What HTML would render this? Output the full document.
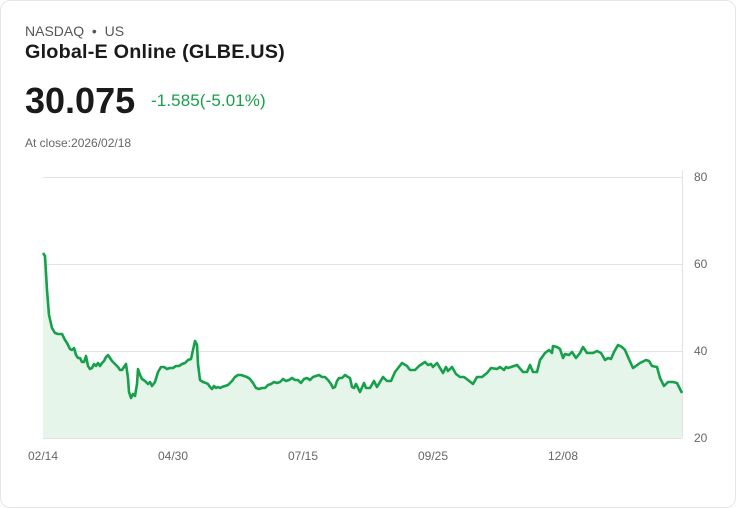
<!DOCTYPE html><html><head><style>
body{margin:0;background:#fff;font-family:"Liberation Sans",sans-serif;}
.card{position:absolute;left:0;top:0;width:734px;height:506px;border:1px solid #e3e6ec;border-radius:10px;}
.t{position:absolute;white-space:nowrap;}
</style></head><body><div class="card"></div>
<div class="t" style="left:25px;top:23px;font-size:14px;color:#555;">NASDAQ &nbsp;•&nbsp; US</div>
<div class="t" style="left:25px;top:41px;font-size:19.8px;font-weight:bold;color:#1a1a1a;letter-spacing:0.2px;">Global-E Online (GLBE.US)</div>
<div class="t" style="left:25px;top:80px;font-size:36px;font-weight:bold;color:#1a1a1a;">30.075</div>
<div class="t" style="left:151px;top:91px;font-size:17px;color:#18a04a;letter-spacing:0.1px;">-1.585(-5.01%)</div>
<div class="t" style="left:25px;top:136px;font-size:12px;color:#666;">At close:2026/02/18</div>
<svg width="736" height="508" style="position:absolute;left:0;top:0" font-family="Liberation Sans" font-size="12" fill="#666">
<g stroke="#e2e2e2" stroke-width="1"><line x1="43" y1="177.5" x2="682" y2="177.5"/><line x1="43" y1="264.5" x2="682" y2="264.5"/><line x1="43" y1="351.5" x2="682" y2="351.5"/><line x1="43" y1="438.5" x2="682" y2="438.5"/><line x1="682.5" y1="170" x2="682.5" y2="438"/></g>
<text x="694" y="181">80</text><text x="694" y="268">60</text><text x="694" y="355">40</text><text x="694" y="442">20</text>
<text x="28" y="460">02/14</text><text x="158" y="460">04/30</text><text x="288" y="460">07/15</text><text x="418" y="460">09/25</text><text x="548" y="460">12/08</text>
<polygon fill="#e6f5ea" points="43,438 43,253 45,256 47,290 49,315 52,328 55,333 58,334 62,334 65,340 67,343 70,349 72,350 74,348 76,355 78,358 80,358 82,362 84,362 86,356 88,366 90,369 92,368 94,364 96,366 98,363 100,366 102,363 104,361 106,357 108,355 110,358 112,361 115,364 118,367 120,370 122,370 124,367 126,364 128,378 129,392 131,398 133,394 135,396 137,384 138,369 140,375 142,379 145,381 148,384 150,382 152,386 155,382 158,372 161,367 164,367 167,369 170,368 173,368 176,366 179,366 182,364 185,363 188,360 191,359 193,350 195,341 197,345 198,364 200,380 203,382 206,383 208,384 210,387 212,389 214,386 216,388 218,387 220,388 222,387 225,386 228,385 232,381 235,377 238,375 241,375 244,376 247,377 250,379 253,383 256,388 259,389 262,388 265,388 268,385 271,384 274,382 277,383 280,382 283,379 286,381 289,380 292,378 295,380 298,380 301,383 304,379 307,378 310,380 313,377 316,376 319,375 322,377 325,377 328,380 331,384 333,388 335,387 337,381 339,378 342,378 345,375 348,377 350,378 352,387 354,388 356,384 360,392 364,383 366,388 370,388 374,381 377,387 383,377 387,381 391,381 395,372 402,363 407,366 410,370 415,370 419,366 425,362 428,365 431,364 433,367 437,363 443,373 446,367 448,371 452,367 456,374 460,377 464,377 468,380 473,384 477,377 482,377 487,373 491,368 497,369 500,367 504,370 506,367 508,368 517,365 523,372 527,372 530,365 533,372 537,372 540,360 545,353 549,350 552,353 553,346 557,347 560,349 563,358 565,354 569,355 572,352 576,358 580,353 583,347 587,353 590,353 593,353 597,351 601,353 605,360 608,358 611,359 614,352 618,345 622,347 625,350 628,357 633,368 640,363 646,360 649,361 652,366 657,367 660,378 664,386 668,382 673,382 677,383 682,393 682,438"/>
<polyline fill="none" stroke="#16a04a" stroke-width="2.6" stroke-linejoin="round" points="43,253 45,256 47,290 49,315 52,328 55,333 58,334 62,334 65,340 67,343 70,349 72,350 74,348 76,355 78,358 80,358 82,362 84,362 86,356 88,366 90,369 92,368 94,364 96,366 98,363 100,366 102,363 104,361 106,357 108,355 110,358 112,361 115,364 118,367 120,370 122,370 124,367 126,364 128,378 129,392 131,398 133,394 135,396 137,384 138,369 140,375 142,379 145,381 148,384 150,382 152,386 155,382 158,372 161,367 164,367 167,369 170,368 173,368 176,366 179,366 182,364 185,363 188,360 191,359 193,350 195,341 197,345 198,364 200,380 203,382 206,383 208,384 210,387 212,389 214,386 216,388 218,387 220,388 222,387 225,386 228,385 232,381 235,377 238,375 241,375 244,376 247,377 250,379 253,383 256,388 259,389 262,388 265,388 268,385 271,384 274,382 277,383 280,382 283,379 286,381 289,380 292,378 295,380 298,380 301,383 304,379 307,378 310,380 313,377 316,376 319,375 322,377 325,377 328,380 331,384 333,388 335,387 337,381 339,378 342,378 345,375 348,377 350,378 352,387 354,388 356,384 360,392 364,383 366,388 370,388 374,381 377,387 383,377 387,381 391,381 395,372 402,363 407,366 410,370 415,370 419,366 425,362 428,365 431,364 433,367 437,363 443,373 446,367 448,371 452,367 456,374 460,377 464,377 468,380 473,384 477,377 482,377 487,373 491,368 497,369 500,367 504,370 506,367 508,368 517,365 523,372 527,372 530,365 533,372 537,372 540,360 545,353 549,350 552,353 553,346 557,347 560,349 563,358 565,354 569,355 572,352 576,358 580,353 583,347 587,353 590,353 593,353 597,351 601,353 605,360 608,358 611,359 614,352 618,345 622,347 625,350 628,357 633,368 640,363 646,360 649,361 652,366 657,367 660,378 664,386 668,382 673,382 677,383 682,393"/>
</svg>
</body></html>
